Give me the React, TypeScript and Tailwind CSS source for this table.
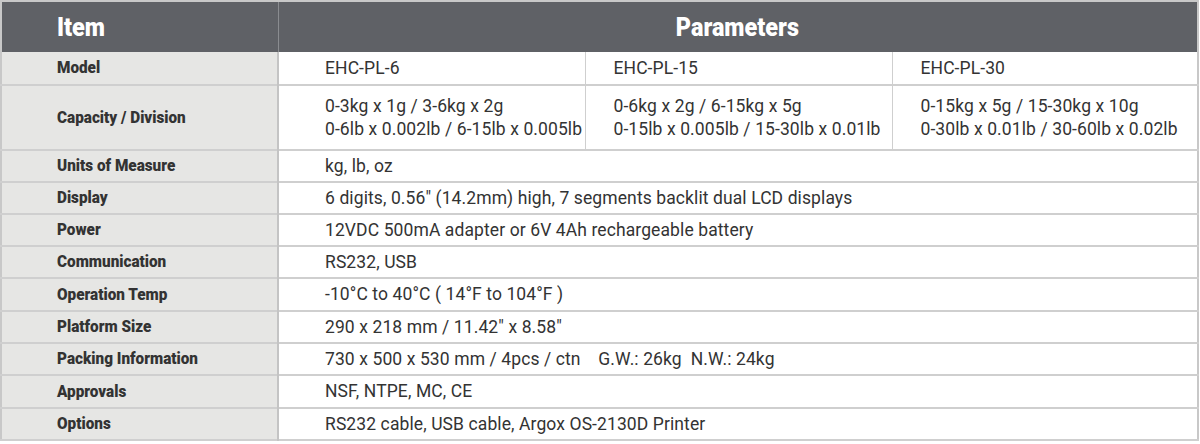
interface Row {
  label: string
  values: string[][]
  h: string
}

const rows: Row[] = [
  { label: "Model", values: [["EHC-PL-6"], ["EHC-PL-15"], ["EHC-PL-30"]], h: "h-[33px]" },
  {
    label: "Capacity / Division",
    values: [
      ["0-3kg x 1g / 3-6kg x 2g", "0-6lb x 0.002lb / 6-15lb x 0.005lb"],
      ["0-6kg x 2g / 6-15kg x 5g", "0-15lb x 0.005lb / 15-30lb x 0.01lb"],
      ["0-15kg x 5g / 15-30kg x 10g", "0-30lb x 0.01lb / 30-60lb x 0.02lb"],
    ],
    h: "h-[65px]",
  },
  { label: "Units of Measure", values: [["kg, lb, oz"]], h: "h-[32px]" },
  { label: "Display", values: [['6 digits, 0.56" (14.2mm) high, 7 segments backlit dual LCD displays']], h: "h-[32px]" },
  { label: "Power", values: [["12VDC 500mA adapter or 6V 4Ah rechargeable battery"]], h: "h-[32px]" },
  { label: "Communication", values: [["RS232, USB"]], h: "h-[32px]" },
  { label: "Operation Temp", values: [["-10°C to 40°C ( 14°F to 104°F )"]], h: "h-[33px]" },
  { label: "Platform Size", values: [['290 x 218 mm / 11.42" x 8.58"']], h: "h-[32px]" },
  { label: "Packing Information", values: [["730 x 500 x 530 mm / 4pcs / ctn\u00a0\u00a0\u00a0\u00a0G.W.: 26kg\u00a0\u00a0N.W.: 24kg"]], h: "h-[32px]" },
  { label: "Approvals", values: [["NSF, NTPE, MC, CE"]], h: "h-[33px]" },
  { label: "Options", values: [["RS232 cable, USB cable, Argox OS-2130D Printer"]], h: "h-[32px]" },
]

export default function App() {
  return (
    <div className="w-[1200px] h-[444px] bg-white">
      <table
        className="w-[1199px] border-collapse border-2 border-[#c8c8c8] text-[#2f2f2f]"
        style={{ fontFamily: "Roboto, sans-serif", tableLayout: "fixed" }}
      >
        <colgroup>
          <col className="w-[277px]" />
          <col className="w-[307px]" />
          <col className="w-[307px]" />
          <col />
        </colgroup>
        <thead>
          <tr className="h-[51px] bg-[#5f6166] text-white">
            <th className="text-left pl-[55px] text-[26px] font-black border-r border-[#8a8c90]">
              <span className="inline-block origin-left scale-x-[0.9]">Item</span>
            </th>
            <th colSpan={3} className="text-center text-[26px] font-black">
              <span className="inline-block origin-center scale-x-[0.9]">Parameters</span>
            </th>
          </tr>
        </thead>
        <tbody>
          {rows.map((row) => (
            <tr key={row.label} className={`${row.h} border-b-2 border-[#cfcfcf]`}>
              <td className="bg-[#e6e6e4] pl-[55px] text-[17px] font-black text-[#333] border-r-2 border-[#c4c4c4] whitespace-nowrap">
                <span className="inline-block origin-left scale-x-[0.9]">{row.label}</span>
              </td>
              {row.values.length === 1 ? (
                <td colSpan={3} className="pl-[46px] text-[17.5px] tracking-[0.1px] text-[#333] whitespace-nowrap">
                  {row.values[0][0]}
                </td>
              ) : (
                row.values.map((v, i) => (
                  <td
                    key={i}
                    className={`text-[17.5px] tracking-[0.1px] leading-[23px] text-[#333] whitespace-nowrap ${i === 0 ? "pl-[46px]" : "pl-[28px] border-l border-[#cfcfcf]"}`}
                  >
                    {v.map((line) => (
                      <div key={line}>{line}</div>
                    ))}
                  </td>
                ))
              )}
            </tr>
          ))}
        </tbody>
      </table>
    </div>
  )
}
